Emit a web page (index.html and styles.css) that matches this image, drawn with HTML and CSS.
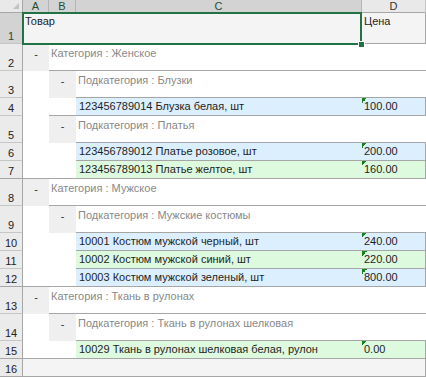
FILE: index.html
```html
<!DOCTYPE html>
<html lang="ru">
<head>
    <meta charset="UTF-8">
    <title>Товары - прайс</title>
    <link rel="stylesheet" href="styles.css">
</head>
<body>
    <div class="sheet">
        <div class="row head">
            <div class="corner"></div>
            <div class="ch sel">A</div>
            <div class="ch sel">B</div>
            <div class="ch sel">C</div>
            <div class="ch">D</div>
        </div>

        <div class="row first">
            <div class="rh sel">1</div>
            <div class="cell title span3">Товар</div>
            <div class="cell title price bb br">Цена</div>
        </div>

        <!-- Женское -->
        <div class="row tall">
            <div class="rh">2</div>
            <div class="cell dash lvl1">-</div>
            <div class="cell group span3 bb">Категория : Женское</div>
        </div>
        <div class="row tall">
            <div class="rh">3</div>
            <div class="cell"></div>
            <div class="cell dash lvl2">-</div>
            <div class="cell group span2 bb">Подкатегория : Блузки</div>
        </div>
        <div class="row">
            <div class="rh">4</div>
            <div class="cell"></div>
            <div class="cell bb"></div>
            <div class="cell item blue bb">123456789014 Блузка белая, шт</div>
            <div class="cell price num blue bb br">100.00</div>
        </div>
        <div class="row tall">
            <div class="rh">5</div>
            <div class="cell"></div>
            <div class="cell dash lvl2">-</div>
            <div class="cell group span2 bb">Подкатегория : Платья</div>
        </div>
        <div class="row">
            <div class="rh">6</div>
            <div class="cell"></div>
            <div class="cell"></div>
            <div class="cell item blue bb">123456789012 Платье розовое, шт</div>
            <div class="cell price num blue bb br">200.00</div>
        </div>
        <div class="row">
            <div class="rh line">7</div>
            <div class="cell bb"></div>
            <div class="cell bb"></div>
            <div class="cell item green bb">123456789013 Платье желтое, шт</div>
            <div class="cell price num green bb br">160.00</div>
        </div>

        <!-- Мужское -->
        <div class="row tall">
            <div class="rh">8</div>
            <div class="cell dash lvl1">-</div>
            <div class="cell group span3 bb">Категория : Мужское</div>
        </div>
        <div class="row tall">
            <div class="rh">9</div>
            <div class="cell"></div>
            <div class="cell dash lvl2">-</div>
            <div class="cell group span2 bb">Подкатегория : Мужские костюмы</div>
        </div>
        <div class="row">
            <div class="rh">10</div>
            <div class="cell"></div>
            <div class="cell"></div>
            <div class="cell item blue bb">10001 Костюм мужской черный, шт</div>
            <div class="cell price num blue bb br">240.00</div>
        </div>
        <div class="row">
            <div class="rh">11</div>
            <div class="cell"></div>
            <div class="cell"></div>
            <div class="cell item green bb">10002 Костюм мужской синий, шт</div>
            <div class="cell price num green bb br">220.00</div>
        </div>
        <div class="row">
            <div class="rh line">12</div>
            <div class="cell bb"></div>
            <div class="cell bb"></div>
            <div class="cell item blue bb">10003 Костюм мужской зеленый, шт</div>
            <div class="cell price num blue bb br">800.00</div>
        </div>

        <!-- Ткань в рулонах -->
        <div class="row tall">
            <div class="rh">13</div>
            <div class="cell dash lvl1">-</div>
            <div class="cell group span3 bb">Категория : Ткань в рулонах</div>
        </div>
        <div class="row tall">
            <div class="rh">14</div>
            <div class="cell"></div>
            <div class="cell dash lvl2">-</div>
            <div class="cell group span2 bb">Подкатегория : Ткань в рулонах шелковая</div>
        </div>
        <div class="row">
            <div class="rh line">15</div>
            <div class="cell bb"></div>
            <div class="cell bb"></div>
            <div class="cell item green bb">10029 Ткань в рулонах шелковая белая, рулон</div>
            <div class="cell price num green bb br">0.00</div>
        </div>

        <div class="row">
            <div class="rh line">16</div>
            <div class="cell total span4 bb br"></div>
        </div>

        <div class="selection"><span class="handle"></span></div>
    </div>
</body>
</html>
```

FILE: styles.css
```css
html, body {
    margin: 0;
    padding: 0;
    background: #fff;
    overflow: hidden;
}
.sheet {
    position: relative;
    width: 426px;
    font-family: "Liberation Sans", Arial, sans-serif;
    font-size: 11px;
    line-height: 13px;
    color: #1e1e1e;
}
.row {
    display: grid;
    grid-template-columns: 23px 26px 27px 286px 64px;
    height: 18px;
}
.row.head {
    height: 13px;
}
.row.first {
    height: 31px;
}
.row.tall {
    height: 27px;
}

/* headers */
.corner {
    background: #e9e9e9;
    border-right: 1px solid #a6a6a6;
    border-bottom: 1px solid #a6a6a6;
    display: flex;
    justify-content: flex-end;
    align-items: flex-end;
    padding: 0 3px 3px 0;
    box-sizing: border-box;
}
.corner::after {
    content: "";
    width: 0;
    height: 0;
    border-left: 6px solid transparent;
    border-bottom: 6px solid #c2c2c2;
}
.ch {
    background: #e9e9e9;
    border-right: 1px solid #c6c6c6;
    border-bottom: 1px solid #a6a6a6;
    box-sizing: border-box;
    text-align: center;
    line-height: 12px;
    color: #333;
}
.ch.sel {
    background: #d3d3d3;
    border-right-color: #b4b4b4;
    color: #1f4e33;
}
.rh {
    background: #ebebeb;
    border-right: 1px solid #a6a6a6;
    border-bottom: 1px solid #c6c6c6;
    box-sizing: border-box;
    display: flex;
    align-items: flex-end;
    justify-content: center;
    color: #222;
    line-height: 12px;
    padding-bottom: 1px;
}
.rh.line {
    border-bottom-color: #a6a6a6;
}
.rh.sel {
    background: #d3d3d3;
    color: #1f4e33;
}

/* cells */
.cell {
    box-sizing: border-box;
    padding: 2px 2px 0;
    white-space: nowrap;
    overflow: hidden;
}
.span2 { grid-column: span 2; }
.span3 { grid-column: span 3; }
.span4 { grid-column: span 4; }
.bb { border-bottom: 1px solid #a6a6a6; }
.br { border-right: 1px solid #a6a6a6; }

.title {
    background: #f4f4f4;
    color: #1e1e1e;
}
.group {
    color: #888;
    padding-top: 3px;
}
.dash {
    background: #efefef;
    text-align: center;
    padding-top: 4px;
    color: #333;
}
.item {
    padding-left: 3px;
}
.price {
    padding-left: 2px;
}
.blue { background-color: #dcefff; }
.green { background-color: #ddf9de; }
.num {
    background-image: linear-gradient(135deg, #16801b 50%, transparent 50%);
    background-size: 5px 5px;
    background-repeat: no-repeat;
}
.total {
    background: #f4f4f4;
}

/* active selection over A1:C1 */
.selection {
    position: absolute;
    left: 22px;
    top: 12px;
    width: 340px;
    height: 33px;
    border: 2px solid #217346;
    box-sizing: border-box;
}
.handle {
    position: absolute;
    right: -5px;
    bottom: -5px;
    width: 5px;
    height: 5px;
    background: #217346;
    border: 1px solid #fff;
}
```
